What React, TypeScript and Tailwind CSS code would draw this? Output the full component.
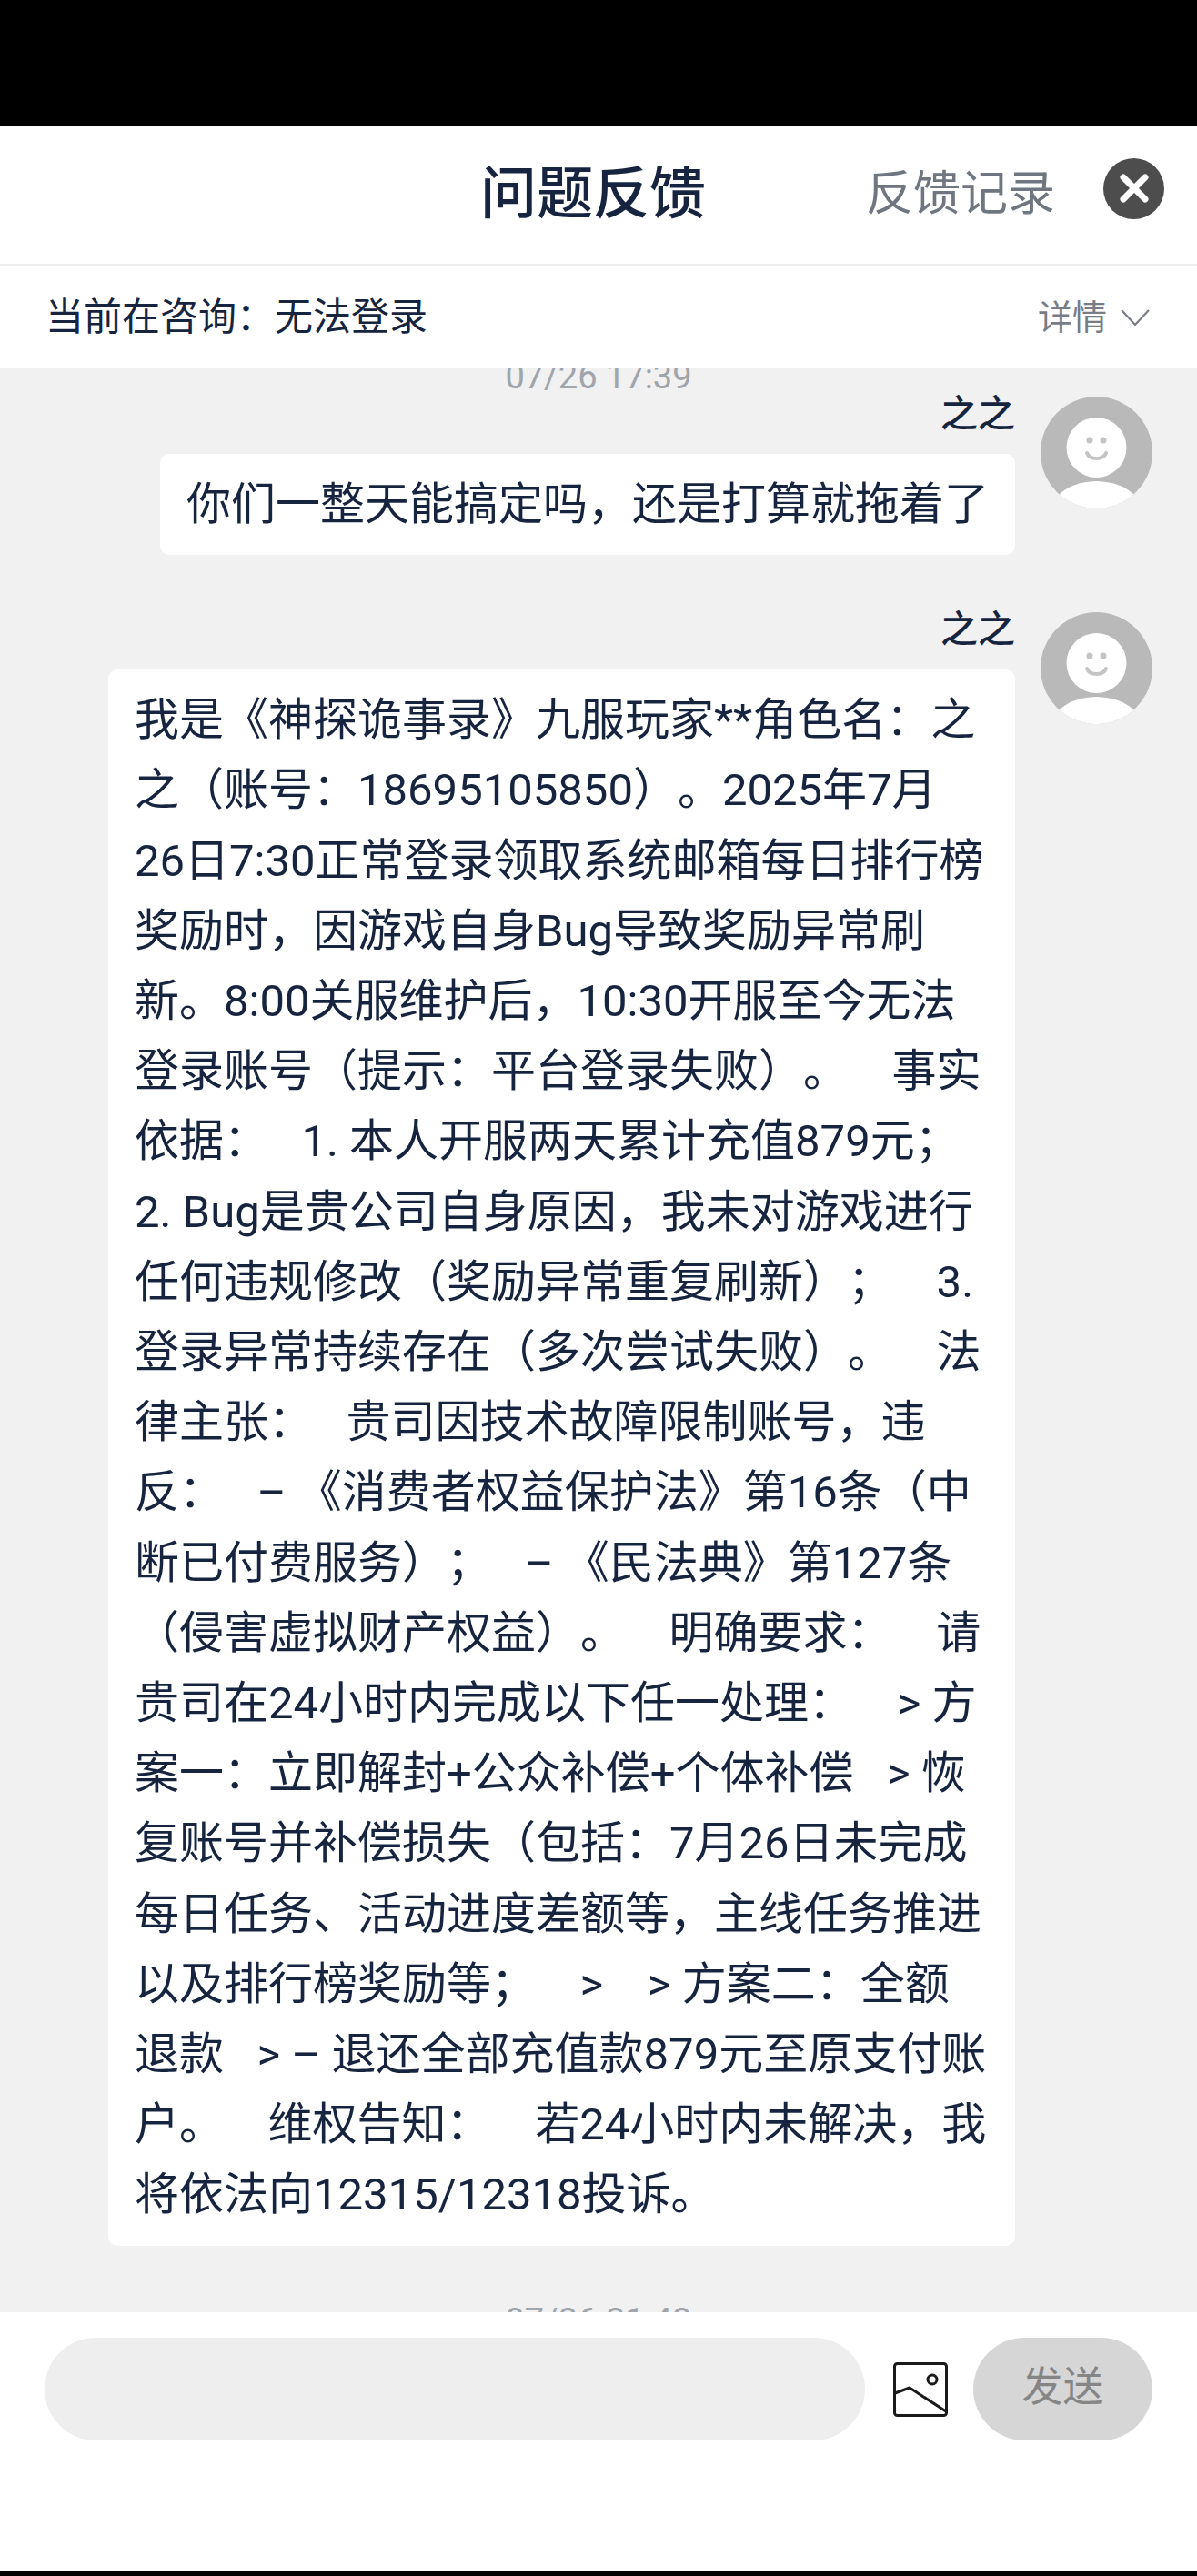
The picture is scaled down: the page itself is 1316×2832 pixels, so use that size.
const lines = [
  "我是《神探诡事录》九服玩家**角色名：之",
  "之（账号：18695105850）。2025年7月",
  "26日7:30正常登录领取系统邮箱每日排行榜",
  "奖励时，因游戏自身Bug导致奖励异常刷",
  "新。8:00关服维护后，10:30开服至今无法",
  "登录账号（提示：平台登录失败）。    事实",
  "依据：   1. 本人开服两天累计充值879元；",
  "2. Bug是贵公司自身原因，我未对游戏进行",
  "任何违规修改（奖励异常重复刷新）；    3.",
  "登录异常持续存在（多次尝试失败）。    法",
  "律主张：   贵司因技术故障限制账号，违",
  "反：   – 《消费者权益保护法》第16条（中",
  "断已付费服务）；   – 《民法典》第127条",
  "（侵害虚拟财产权益）。    明确要求：    请",
  "贵司在24小时内完成以下任一处理：    > 方",
  "案一：立即解封+公众补偿+个体补偿   > 恢",
  "复账号并补偿损失（包括：7月26日未完成",
  "每日任务、活动进度差额等，主线任务推进",
  "以及排行榜奖励等；    >    > 方案二：全额",
  "退款   > – 退还全部充值款879元至原支付账",
  "户。    维权告知：    若24小时内未解决，我",
  "将依法向12315/12318投诉。",
];

function Avatar() {
  return (
    <svg viewBox="0 0 123 123" className="h-[123px] w-[123px] shrink-0">
      <defs>
        <clipPath id="avatar-clip">
          <circle cx="61.5" cy="61.5" r="61.5" />
        </clipPath>
      </defs>
      <circle cx="61.5" cy="61.5" r="61.5" fill="#b9b9b9" />
      <circle cx="61.5" cy="56" r="33" fill="#ffffff" />
      <g clipPath="url(#avatar-clip)">
        <ellipse cx="61.5" cy="127" rx="50" ry="34" fill="#ffffff" />
      </g>
      <circle cx="54" cy="48" r="3.5" fill="#c4c4c4" />
      <circle cx="69" cy="48" r="3.5" fill="#c4c4c4" />
      <path d="M51 62c3 8 18 8 21 0" fill="none" stroke="#c4c4c4" strokeWidth="4" strokeLinecap="round" />
    </svg>
  );
}

function Message({ children }: { children: React.ReactNode }) {
  return (
    <div className="flex justify-end gap-[28px] pr-[49px]">
      <div className="flex flex-col items-end">
        <div className="-mt-[6px] text-[41px] font-medium leading-[50px] text-[#16243f]">之之</div>
        <div className="mt-[19px] rounded-[10px] bg-white px-[29px] py-[17px] text-[49px] leading-[77.2px] text-[#16243f]">
          {children}
        </div>
      </div>
      <Avatar />
    </div>
  );
}

export default function App() {
  return (
    <div className="flex h-[2832px] w-[1316px] flex-col overflow-hidden bg-black font-['Roboto','Noto_Sans_CJK_SC',sans-serif] [text-spacing-trim:space-all]">
      <div className="h-[138px] shrink-0" />
      <header className="relative flex h-[154px] shrink-0 items-center justify-end border-b-2 border-[#eeeeee] bg-white pr-[36px]">
        <h1 className="absolute left-[528px] text-[62px] font-medium leading-[80px] text-[#16243f]">问题反馈</h1>
        <span className="mr-[53px] text-[52px] leading-[70px] text-[#6f7680]">反馈记录</span>
        <button className="mb-[14px] flex h-[67px] w-[67px] items-center justify-center rounded-full bg-[#4d4d4d]">
          <svg viewBox="0 0 32 32" className="h-[32px] w-[32px]" fill="none" stroke="#ffffff" strokeWidth="7" strokeLinecap="round">
            <path d="M4 4l24 24M28 4L4 28" />
          </svg>
        </button>
      </header>
      <div className="flex h-[113px] shrink-0 items-center justify-between bg-white pl-[50px] pr-[51px]">
        <span className="whitespace-pre text-[42px] leading-[56px] text-[#16243f]">当前在咨询：无法登录</span>
        <span className="flex items-center gap-[14px] text-[38px] leading-[50px] text-[#777c85]">
          详情
          <svg viewBox="0 0 34 20" className="h-[20px] w-[34px]" fill="none" stroke="#777c85" strokeWidth="2.2">
            <path d="M2 2l15 16L32 2" />
          </svg>
        </span>
      </div>
      <main className="flex min-h-0 flex-1 flex-col overflow-hidden bg-[#f1f1f1]">
        <div className="-mt-[16px] text-center text-[38px] leading-[50px] text-[#a0a4ab]">07/26 17:39</div>
        <div className="-mt-[3px]">
          <Message>你们一整天能搞定吗，还是打算就拖着了</Message>
        </div>
        <div className="mt-[63px]">
          <Message>
            <div className="w-[939px]">
              {lines.map((line) => (
                <div key={line} className="whitespace-pre">
                  {line}
                </div>
              ))}
            </div>
          </Message>
        </div>
        <div className="mt-[58px] text-center text-[38px] leading-[50px] text-[#a0a4ab]">07/26 21:43</div>
      </main>
      <footer className="flex h-[285px] shrink-0 items-start bg-white pl-[49px] pt-[28px]">
        <div className="h-[113px] w-[902px] rounded-full bg-[#eeeeee]" />
        <svg viewBox="0 0 60 60" className="ml-[31px] mt-[27px] h-[60px] w-[60px] shrink-0" fill="none" stroke="#1a1a1a" strokeWidth="3" strokeLinejoin="round" strokeLinecap="round">
          <rect x="1.5" y="1.5" width="57" height="57" rx="3" />
          <circle cx="43" cy="19" r="5" />
          <path d="M2 34l16-6 40 26" />
        </svg>
        <button className="ml-[28px] h-[113px] w-[197px] rounded-full bg-[#d6d6d6] pb-[4px] text-[45px] text-[#858585]">发送</button>
      </footer>
      <div className="h-[5px] shrink-0" />
    </div>
  );
}
